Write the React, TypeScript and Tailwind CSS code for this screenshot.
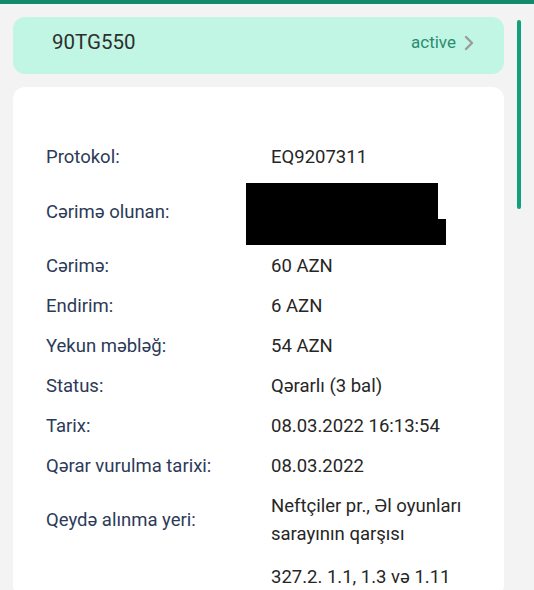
import React from 'react';

const font = { fontFamily: 'Roboto, "Noto Sans", Arial, sans-serif' };

type Row = { label: string; value: React.ReactNode };

function InfoRow({ label, value }: Row) {
  return (
    <div className="flex items-center py-1.5">
      <div className="w-[225px] shrink-0 text-[#2c3a58]">{label}</div>
      <div className="flex-1 text-[#262626]">{value}</div>
    </div>
  );
}

export default function App() {
  const rows: Row[] = [
    { label: 'Cərimə:', value: '60 AZN' },
    { label: 'Endirim:', value: '6 AZN' },
    { label: 'Yekun məbləğ:', value: '54 AZN' },
    { label: 'Status:', value: 'Qərarlı (3 bal)' },
    { label: 'Tarix:', value: '08.03.2022 16:13:54' },
    { label: 'Qərar vurulma tarixi:', value: '08.03.2022' },
    {
      label: 'Qeydə alınma yeri:',
      value: (
        <>
          Neftçiler pr., Əl oyunları
          <br />
          sarayının qarşısı
        </>
      ),
    },
    { label: '', value: '327.2. 1.1, 1.3 və 1.11' },
  ];

  return (
    <div className="relative h-[590px] w-full overflow-hidden bg-[#f3f3f3]" style={font}>
      <div className="h-[4px] bg-[#138a6c]" />

      <div className="flex w-[504px] flex-col gap-[13px] pl-[13px] pt-[13px]">
        <div className="flex h-[57px] items-center justify-between rounded-xl bg-[#c0f6e3] pb-[6px] pl-[39px] pr-[28px]">
          <span className="text-[20.5px] text-[#2e2e2e]">90TG550</span>
          <div className="flex items-center gap-[6px]">
            <span className="text-[17px] text-[#2b8c72]">active</span>
            <svg width="14" height="16" viewBox="0 0 14 16" fill="none">
              <path d="M4 2l6 6-6 6" stroke="#9b9b9b" strokeWidth="2.4" strokeLinecap="round" strokeLinejoin="round" />
            </svg>
          </div>
        </div>

        <div className="rounded-xl bg-white pl-[33px] pt-[50px] text-[18.5px] leading-[28px]">
          <InfoRow label="Protokol:" value="EQ9207311" />
          <div className="flex items-center py-1.5">
            <div className="w-[225px] shrink-0 text-[#2c3a58]">Cərimə olunan:</div>
            <div className="flex-1">
              <div className="-mb-[5px] -ml-[25px] flex h-[62px] w-[200px] flex-col">
                <div className="h-[36px] w-[192px] bg-black" />
                <div className="h-[26px] w-[200px] bg-black" />
              </div>
            </div>
          </div>
          {rows.map((r, i) => (
            <div key={i} className={i === rows.length - 1 ? 'pt-[3px]' : ''}>
              <InfoRow label={r.label} value={r.value} />
            </div>
          ))}
        </div>
      </div>

      <div className="absolute left-[517px] top-[20px] h-[189px] w-[4px] rounded-full bg-[#11a07c]" />
    </div>
  );
}
